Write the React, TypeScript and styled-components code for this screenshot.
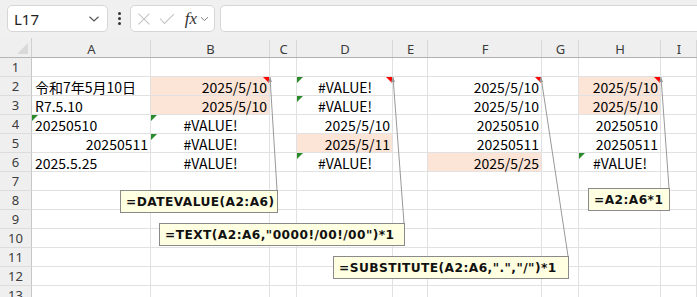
import React from "react";
import styled, { createGlobalStyle, css } from "styled-components";

const GlobalStyle = createGlobalStyle`
  html, body {
    margin: 0;
    padding: 0;
    background: #ffffff;
    overflow: hidden;
  }
  * {
    box-sizing: border-box;
  }
`;

const COLS = ["A", "B", "C", "D", "E", "F", "G", "H", "I"];
const COL_WIDTHS = "32px 119px 119px 27px 96px 35px 114px 37px 82px 1fr";

type Align = "left" | "right" | "center";
type CellData = {
  text?: string;
  align?: Align;
  fill?: boolean;
  green?: boolean;
  red?: boolean;
};

const E = (): CellData => ({});
const L = (text: string, extra: Partial<CellData> = {}): CellData => ({ text, align: "left", ...extra });
const R = (text: string, extra: Partial<CellData> = {}): CellData => ({ text, align: "right", ...extra });
const C = (text: string, extra: Partial<CellData> = {}): CellData => ({ text, align: "center", ...extra });

// rows 1..13, columns A..I
const rows: CellData[][] = [
  [E(), E(), E(), E(), E(), E(), E(), E(), E()],
  [
    L("令和7年5月10日"),
    R("2025/5/10", { fill: true, red: true }),
    E(),
    C("#VALUE!", { green: true, red: true }),
    E(),
    R("2025/5/10", { red: true }),
    E(),
    R("2025/5/10", { fill: true, red: true }),
    E(),
  ],
  [
    L("R7.5.10"),
    R("2025/5/10", { fill: true }),
    E(),
    C("#VALUE!", { green: true }),
    E(),
    R("2025/5/10"),
    E(),
    R("2025/5/10", { fill: true }),
    E(),
  ],
  [
    L("20250510", { green: true }),
    C("#VALUE!", { green: true }),
    E(),
    R("2025/5/10"),
    E(),
    R("20250510"),
    E(),
    R("20250510"),
    E(),
  ],
  [
    R("20250511"),
    C("#VALUE!", { green: true }),
    E(),
    R("2025/5/11", { fill: true }),
    E(),
    R("20250511"),
    E(),
    R("20250511"),
    E(),
  ],
  [
    L("2025.5.25"),
    C("#VALUE!"),
    E(),
    C("#VALUE!", { green: true }),
    E(),
    R("2025/5/25", { fill: true }),
    E(),
    C("#VALUE!", { green: true }),
    E(),
  ],
  ...Array.from({ length: 7 }, () => COLS.map(() => E())),
];

// comment boxes (page coordinates) and where their leader line starts
const comments = [
  { text: "=DATEVALUE(A2:A6)", left: 120, top: 190, width: 158, from: [270, 77], to: [277, 190] },
  { text: '=TEXT(A2:A6,"0000!/00!/00")*1', left: 159, top: 223, width: 246, from: [393, 77], to: [404, 223] },
  { text: '=SUBSTITUTE(A2:A6,".","/")*1', left: 333, top: 256, width: 236, from: [541, 77], to: [568, 256] },
  { text: "=A2:A6*1", left: 588, top: 188, width: 82, from: [661, 77], to: [669, 188] },
];

export default function App() {
  return (
    <>
      <GlobalStyle />
      <Page>
        <Toolbar>
          <NameBox>
            <span>L17</span>
            <Chevron width="12" height="8" viewBox="0 0 12 8">
              <path d="M1.5 1.8 L6 6 L10.5 1.8" />
            </Chevron>
          </NameBox>
          <Dots>
            <i />
            <i />
            <i />
          </Dots>
          <FxBox>
            <svg width="14" height="14" viewBox="0 0 14 14">
              <path d="M1.5 1.5 L12.5 12.5 M12.5 1.5 L1.5 12.5" stroke="#c4c4c4" strokeWidth="1.1" fill="none" />
            </svg>
            <svg width="16" height="12" viewBox="0 0 16 12">
              <path d="M1 5.5 L5.5 10.5 L15 1" stroke="#c4c4c4" strokeWidth="1.1" fill="none" />
            </svg>
            <FxLabel>fx</FxLabel>
            <SmallChevron width="9" height="6" viewBox="0 0 9 6">
              <path d="M1 1.2 L4.5 4.6 L8 1.2" />
            </SmallChevron>
          </FxBox>
          <FormulaInput />
        </Toolbar>

        <Grid>
          <Corner>
            <CornerTriangle />
          </Corner>
          {COLS.map((c) => (
            <ColHeader key={c}>{c}</ColHeader>
          ))}
          {rows.map((row, r) => (
            <React.Fragment key={r}>
              <RowHeader>{r + 1}</RowHeader>
              {row.map((cell, c) => (
                <Cell
                  key={c}
                  $align={cell.align ?? "left"}
                  $fill={!!cell.fill}
                  $green={!!cell.green}
                  $red={!!cell.red}
                >
                  {cell.text}
                </Cell>
              ))}
            </React.Fragment>
          ))}
        </Grid>

        <Leaders width="697" height="297">
          {comments.map((cm, i) => (
            <g key={i}>
              <line x1={cm.from[0]} y1={cm.from[1]} x2={cm.to[0]} y2={cm.to[1]} />
              <polygon
                points={`${cm.from[0]},${cm.from[1]} ${cm.from[0] - 2},${cm.from[1] + 5} ${cm.from[0] + 2},${cm.from[1] + 5}`}
              />
            </g>
          ))}
        </Leaders>

        {comments.map((cm, i) => (
          <Comment key={i} style={{ left: cm.left, top: cm.top, width: cm.width }}>
            {cm.text}
          </Comment>
        ))}
      </Page>
    </>
  );
}

const Page = styled.div`
  position: relative;
  width: 697px;
  height: 297px;
  overflow: hidden;
  background: #ffffff;
`;

const Toolbar = styled.div`
  height: 38px;
  background: #f0f0f0;
  display: flex;
  align-items: flex-start;
  padding: 5px 0 0 7px;
`;

const boxBase = css`
  height: 27px;
  background: #ffffff;
  border: 1px solid #d6d6d6;
  border-radius: 5px;
`;

const NameBox = styled.div`
  ${boxBase};
  width: 101px;
  display: flex;
  align-items: center;
  justify-content: space-between;
  padding: 0 7px 0 6px;
  font-family: "Noto Sans", "Liberation Sans", sans-serif;
  font-size: 15px;
  color: #222222;
`;

const Chevron = styled.svg`
  path {
    stroke: #555555;
    stroke-width: 1.2;
    fill: none;
  }
`;

const SmallChevron = styled.svg`
  path {
    stroke: #7a7a7a;
    stroke-width: 1;
    fill: none;
  }
`;

const Dots = styled.div`
  width: 22px;
  height: 27px;
  display: flex;
  flex-direction: column;
  align-items: center;
  justify-content: center;
  gap: 2px;

  i {
    width: 3px;
    height: 3px;
    background: #333333;
    border-radius: 50%;
  }
`;

const FxBox = styled.div`
  ${boxBase};
  width: 85px;
  display: flex;
  align-items: center;
  gap: 8px;
  padding: 0 5px 0 6px;
`;

const FxLabel = styled.span`
  font-family: "Liberation Serif", "DejaVu Serif", serif;
  font-style: italic;
  font-size: 17px;
  color: #333333;
  margin-left: 2px;
  margin-right: -5px;
  line-height: 1;
`;

const FormulaInput = styled.div`
  ${boxBase};
  flex: 1;
  margin-left: 5px;
  border-right: none;
  border-radius: 5px 0 0 5px;
`;

const Grid = styled.div`
  display: grid;
  grid-template-columns: ${COL_WIDTHS};
  grid-template-rows: 20px;
  grid-auto-rows: 19px;
  background: #ffffff;
`;

const headerBase = css`
  background: #efefef;
  font-family: "Noto Sans", "Liberation Sans", sans-serif;
  font-size: 13px;
  color: #3c3c3c;
  display: flex;
  align-items: center;
  justify-content: center;
`;

const Corner = styled.div`
  ${headerBase};
  border-bottom: 1px solid #b5b5b5;
  border-right: 1px solid #d0d0d0;
  position: relative;
`;

const CornerTriangle = styled.div`
  position: absolute;
  right: 3px;
  bottom: 3px;
  width: 0;
  height: 0;
  border-left: 11px solid transparent;
  border-bottom: 11px solid #d9d9d9;
`;

const ColHeader = styled.div`
  ${headerBase};
  padding-top: 3px;
  border-bottom: 1px solid #b0b0b0;
  background:
    linear-gradient(#efefef, #efefef) top / 100% 2px no-repeat,
    linear-gradient(#d8d8d8, #d8d8d8) right / 1px 100% no-repeat,
    #efefef;
`;

const RowHeader = styled.div`
  ${headerBase};
  border-right: 1px solid #c6c6c6;
  border-bottom: 1px solid #dcdcdc;
`;

const Cell = styled.div<{ $align: Align; $fill: boolean; $green: boolean; $red: boolean }>`
  position: relative;
  border-right: 1px solid #e1e1e1;
  border-bottom: 1px solid #e1e1e1;
  background: ${(p) => (p.$fill ? "#fce4d6" : "#ffffff")};
  font-family: "Noto Sans CJK JP", "Noto Sans", sans-serif;
  font-size: 14px;
  line-height: 18px;
  color: #000000;
  white-space: nowrap;
  display: flex;
  align-items: center;
  padding: 1px 2px 0 3px;
  justify-content: ${(p) =>
    p.$align === "right" ? "flex-end" : p.$align === "center" ? "center" : "flex-start"};

  ${(p) =>
    p.$green &&
    css`
      &::before {
        content: "";
        position: absolute;
        left: 0;
        top: 0;
        border-top: 6px solid #2b8a2b;
        border-right: 6px solid transparent;
      }
    `}

  ${(p) =>
    p.$red &&
    css`
      &::after {
        content: "";
        position: absolute;
        right: 0;
        top: 0;
        border-top: 6px solid #ff0000;
        border-left: 6px solid transparent;
      }
    `}
`;

const Leaders = styled.svg`
  position: absolute;
  left: 0;
  top: 0;
  pointer-events: none;

  line {
    stroke: #999999;
    stroke-width: 1;
  }
  polygon {
    fill: #999999;
  }
`;

const Comment = styled.div`
  position: absolute;
  height: 23px;
  background: #ffffe1;
  border: 1px solid #8a8a8a;
  padding: 0 0 0 5px;
  display: flex;
  align-items: center;
  font-family: "DejaVu Sans", "Liberation Sans", sans-serif;
  font-weight: bold;
  font-size: 12.2px;
  letter-spacing: 0.45px;
  color: #111111;
  white-space: nowrap;
`;
